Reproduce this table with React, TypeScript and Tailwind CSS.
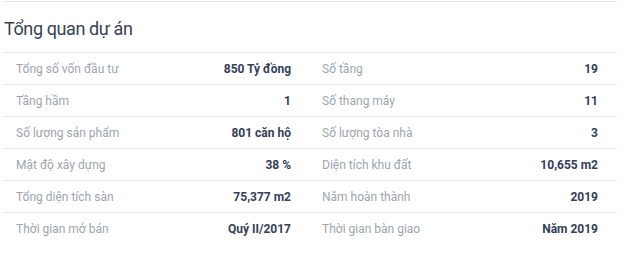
import React from 'react';

const rows: [string, string, string, string][] = [
  ['Tổng số vốn đầu tư', '850 Tỷ đồng', 'Số tầng', '19'],
  ['Tầng hầm', '1', 'Số thang máy', '11'],
  ['Số lượng sản phẩm', '801 căn hộ', 'Số lượng tòa nhà', '3'],
  ['Mật độ xây dựng', '38 %', 'Diện tích khu đất', '10,655 m2'],
  ['Tổng diện tích sàn', '75,377 m2', 'Năm hoàn thành', '2019'],
  ['Thời gian mở bán', 'Quý II/2017', 'Thời gian bàn giao', 'Năm 2019'],
];

const Cell: React.FC<{ label: string; value: string; className: string }> = ({ label, value, className }) => (
  <div className={`flex items-center justify-between h-full ${className}`}>
    <span className="text-[#a0a5ad]">{label}</span>
    <span className="font-bold text-[#34405a]">{value}</span>
  </div>
);

const App: React.FC = () => {
  return (
    <div className="w-[640px] h-[258px] bg-white font-['Roboto',sans-serif]">
      <div className="ml-[3px] w-[614px] border-t border-[#e6e7ea] mt-px">
        <h2 className="h-[50px] pt-[15px] pl-px text-[18px] leading-[24px] tracking-[-0.4px] text-[#384252]">Tổng quan dự án</h2>
        <div className="text-[12px]">
          {rows.map((r, i) => (
            <div
              key={i}
              className="grid grid-cols-[304px_310px] h-[32px] border-t border-[#e6e7ea]"
            >
              <Cell label={r[0]} value={r[1]} className="pl-[13px] pr-[16px]" />
              <Cell label={r[2]} value={r[3]} className="pl-[15px] pr-[19px]" />
            </div>
          ))}
        </div>
      </div>
    </div>
  );
};

export default App;
